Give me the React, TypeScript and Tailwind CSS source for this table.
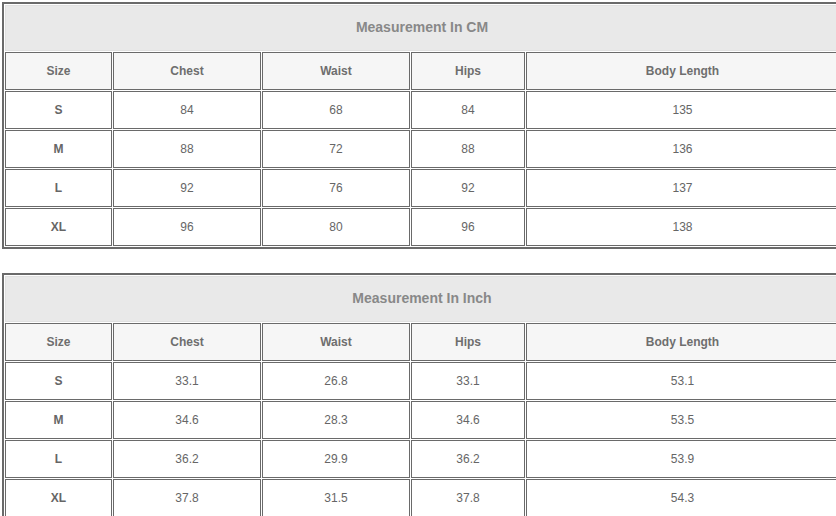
import React from "react";

type Row = { size: string; chest: string; waist: string; hips: string; length: string };

const cm: Row[] = [
  { size: "S", chest: "84", waist: "68", hips: "84", length: "135" },
  { size: "M", chest: "88", waist: "72", hips: "88", length: "136" },
  { size: "L", chest: "92", waist: "76", hips: "92", length: "137" },
  { size: "XL", chest: "96", waist: "80", hips: "96", length: "138" },
];

const inch: Row[] = [
  { size: "S", chest: "33.1", waist: "26.8", hips: "33.1", length: "53.1" },
  { size: "M", chest: "34.6", waist: "28.3", hips: "34.6", length: "53.5" },
  { size: "L", chest: "36.2", waist: "29.9", hips: "36.2", length: "53.9" },
  { size: "XL", chest: "37.8", waist: "31.5", hips: "37.8", length: "54.3" },
];

function SizeTable({ title, rows }: { title: string; rows: Row[] }) {
  const head = ["Size", "Chest", "Waist", "Hips", "Body Length"];
  return (
    <table className="table-fixed w-[840px] border-separate border-spacing-[1px] border-2 border-[#6a6a6a]">
      <colgroup>
        <col className="w-[107px]" />
        <col className="w-[148px]" />
        <col className="w-[148px]" />
        <col className="w-[114px]" />
        <col className="w-[313px]" />
      </colgroup>
      <tbody>
        <tr>
          <td
            colSpan={5}
            className="h-[46px] pb-[2px] bg-[#e9e9e9] border border-[#e0e0e0] text-center text-[14px] font-bold text-[#888]"
          >
            {title}
          </td>
        </tr>
        <tr>
          {head.map((h) => (
            <td
              key={h}
              className="h-[38px] bg-[#f6f6f6] border border-[#6a6a6a] text-center text-[12px] font-bold text-[#6e6e6e]"
            >
              {h}
            </td>
          ))}
        </tr>
        {rows.map((r) => (
          <tr key={r.size}>
            <td className="h-[38px] bg-white border border-[#6a6a6a] text-center text-[12px] font-bold text-[#666]">
              {r.size}
            </td>
            <td className="border border-[#6a6a6a] text-center text-[12px] text-[#666]">{r.chest}</td>
            <td className="border border-[#6a6a6a] text-center text-[12px] text-[#666]">{r.waist}</td>
            <td className="border border-[#6a6a6a] text-center text-[12px] text-[#666]">{r.hips}</td>
            <td className="border border-[#6a6a6a] text-center text-[12px] text-[#666]">{r.length}</td>
          </tr>
        ))}
      </tbody>
    </table>
  );
}

export default function App() {
  return (
    <div className="w-[836px] h-[516px] overflow-hidden bg-white font-['Liberation_Sans',Arial,sans-serif]">
      <div className="flex flex-col gap-[24px] pt-[2px] pl-[2px]">
        <SizeTable title="Measurement In CM" rows={cm} />
        <SizeTable title="Measurement In Inch" rows={inch} />
      </div>
    </div>
  );
}
